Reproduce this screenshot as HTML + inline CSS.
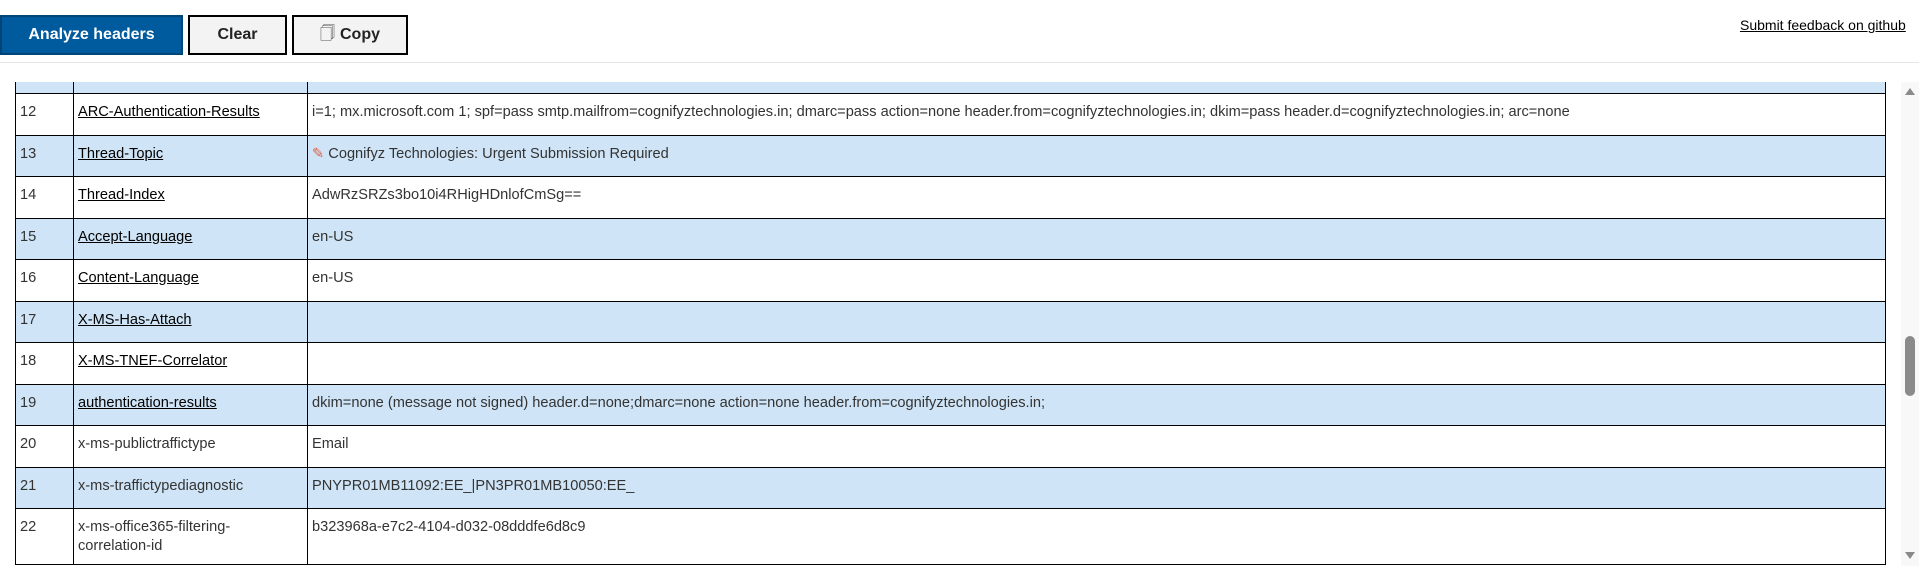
<!DOCTYPE html>
<html><head><meta charset="utf-8"><style>
*{margin:0;padding:0;box-sizing:border-box}
body{width:1919px;height:566px;overflow:hidden;background:#fff;font-family:"Liberation Sans",sans-serif;position:relative;color:#222}
.btn{position:absolute;top:15px;height:40px;font-size:16px;display:flex;align-items:center;justify-content:center}
#an{left:0;width:183px;background:#005a9e;color:#fff;font-weight:bold;border:2px solid #004578}
#cl{left:188px;width:99px;background:#f3f3f3;border:2px solid #000;color:#222;font-weight:bold}
#cp{left:292px;width:116px;background:#f3f3f3;border:2px solid #000;color:#222;font-weight:bold}
#fb{position:absolute;left:1740px;top:17px;font-size:14px;color:#000;text-decoration:underline}
#sep{position:absolute;left:0;top:62px;width:1919px;height:1px;background:#e6e6e6}
table{position:absolute;left:15px;top:82px;width:1871px;border-collapse:collapse;font-size:14.6px;table-layout:fixed}
td{border:1.5px solid #000;vertical-align:top;padding:9px 3px 0 4px;color:#333;line-height:19px}
tr.t td{border-top:none}
tr.b td{background:#cfe4f6}
td a{color:#000;text-decoration:underline}
#sb{position:absolute;left:1901px;top:82px;width:18px;height:484px;background:#f8f8f8}
#th{position:absolute;left:1905px;top:336px;width:10px;height:60px;background:#8a8a8a;border-radius:5px}
.ar{position:absolute;left:1905px;width:0;height:0;border-left:5px solid transparent;border-right:5px solid transparent}
</style></head><body>
<div class="btn" id="an">Analyze headers</div>
<div class="btn" id="cl">Clear</div>
<div class="btn" id="cp"><span style="font-size:15px;margin-right:5px;font-weight:normal">&#x1F5CD;</span>Copy</div>
<div id="fb">Submit feedback on github</div>
<div id="sep"></div>
<table>
<colgroup><col style="width:58px"><col style="width:234px"><col></colgroup>
<tr class="b t" style="height:11px"><td style="padding:0"></td><td style="padding:0"></td><td style="padding:0"></td></tr>
<tr style="height:42px"><td>12</td><td><a>ARC-Authentication-Results</a></td><td>i=1; mx.microsoft.com 1; spf=pass smtp.mailfrom=cognifyztechnologies.in; dmarc=pass action=none header.from=cognifyztechnologies.in; dkim=pass header.d=cognifyztechnologies.in; arc=none</td></tr>
<tr class="b" style="height:41px"><td>13</td><td><a>Thread-Topic</a></td><td><span style="color:#e06040">&#x270E;</span> Cognifyz Technologies: Urgent Submission Required</td></tr>
<tr style="height:42px"><td>14</td><td><a>Thread-Index</a></td><td>AdwRzSRZs3bo10i4RHigHDnlofCmSg==</td></tr>
<tr class="b" style="height:41px"><td>15</td><td><a>Accept-Language</a></td><td>en-US</td></tr>
<tr style="height:42px"><td>16</td><td><a>Content-Language</a></td><td>en-US</td></tr>
<tr class="b" style="height:41px"><td>17</td><td><a>X-MS-Has-Attach</a></td><td></td></tr>
<tr style="height:42px"><td>18</td><td><a>X-MS-TNEF-Correlator</a></td><td></td></tr>
<tr class="b" style="height:41px"><td>19</td><td><a>authentication-results</a></td><td>dkim=none (message not signed) header.d=none;dmarc=none action=none header.from=cognifyztechnologies.in;</td></tr>
<tr style="height:42px"><td>20</td><td>x-ms-publictraffictype</td><td>Email</td></tr>
<tr class="b" style="height:41px"><td>21</td><td>x-ms-traffictypediagnostic</td><td>PNYPR01MB11092:EE_|PN3PR01MB10050:EE_</td></tr>
<tr style="height:56px"><td>22</td><td>x-ms-office365-filtering-<br>correlation-id</td><td>b323968a-e7c2-4104-d032-08dddfe6d8c9</td></tr>
</table>
<div id="sb"></div><div id="th"></div>
<div class="ar" style="top:88px;border-bottom:7px solid #8a8a8a"></div>
<div class="ar" style="top:552px;border-top:7px solid #8a8a8a"></div>
</body></html>
